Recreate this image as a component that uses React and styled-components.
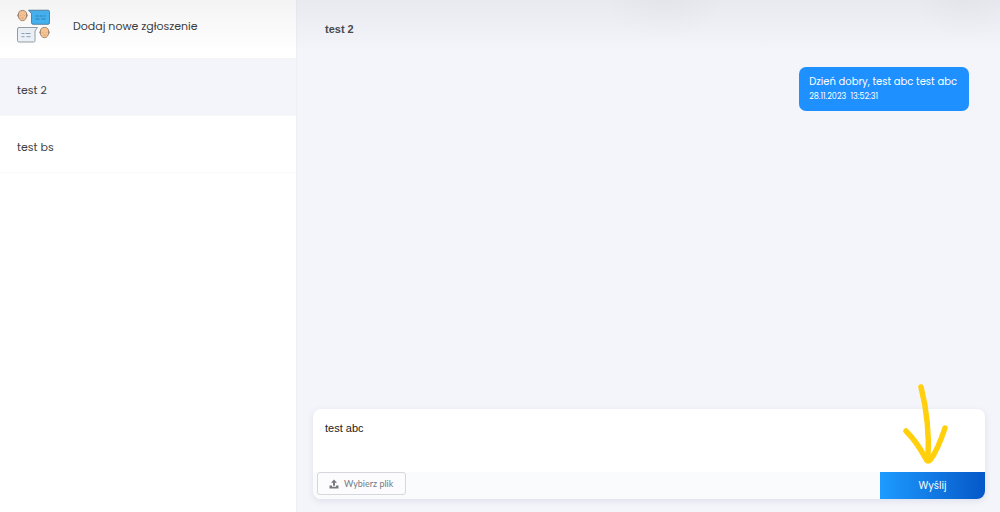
import React, { useState } from "react";
import styled, { createGlobalStyle } from "styled-components";

const GlobalStyle = createGlobalStyle`
  *, *::before, *::after { box-sizing: border-box; }
  body {
    margin: 0;
    background: #f4f5fb;
    color: #3c3e42;
    font-family: Poppins, Inter, "Liberation Sans", sans-serif;
  }
  button, textarea { font: inherit; color: inherit; }
`;

const Page = styled.div`
  position: relative;
  display: flex;
  min-height: 100vh;
`;

const TopShade = styled.div`
  position: absolute;
  inset: 0 0 auto;
  height: 52px;
  pointer-events: none;
  background:
    radial-gradient(ellipse 60px 40px at 66.5% 0, rgba(60, 60, 50, 0.03), transparent),
    radial-gradient(ellipse 50px 40px at 96.5% 0, rgba(60, 60, 50, 0.03), transparent),
    linear-gradient(rgba(40, 40, 50, 0.055), transparent);
`;

const Sidebar = styled.aside`
  display: flex;
  flex-direction: column;
  flex: 0 0 297px;
  background: #fff;
  border-right: 1px solid #eeeff5;
`;

const NewTicket = styled.button`
  display: flex;
  align-items: center;
  gap: 23px;
  height: 59px;
  padding: 0 17px 6px;
  border: 0;
  border-bottom: 1px solid #f5f5f8;
  background: transparent;
  font-size: 11px;
  line-height: 18px;
  text-align: left;
  cursor: pointer;
`;

const Threads = styled.nav`
  display: flex;
  flex-direction: column;
`;

const Thread = styled.a`
  display: flex;
  align-items: center;
  height: 57px;
  padding: 6px 17px 0;
  border-bottom: 1px solid #f8f8f8;
  background: ${({ $active }) => ($active ? "#f4f5fb" : "#fff")};
  color: inherit;
  font-size: 11px;
  line-height: 18px;
  text-decoration: none;
`;

const Conversation = styled.main`
  display: flex;
  flex: 1;
  flex-direction: column;
  min-width: 0;
  padding: 20px 15px 13px 16px;
`;

const Title = styled.h1`
  margin: 0;
  padding: 0 12px;
  color: #484a4e;
  font-family: "Liberation Sans", Arial, sans-serif;
  font-size: 11px;
  font-weight: 700;
  line-height: 18px;
`;

const Messages = styled.section`
  display: flex;
  flex: 1;
  flex-direction: column;
  align-items: flex-end;
  padding: 29px 16px;
`;

const Message = styled.article`
  height: 44px;
  padding: 7px 12px 0 10px;
  border-radius: 7px;
  background: #1e90ff;
  color: #fff;
`;

const MessageText = styled.p`
  margin: 0;
  font-size: 10px;
  line-height: 16px;
`;

const MessageTime = styled.time`
  display: block;
  font-size: 8px;
  line-height: 14px;
  white-space: pre;
`;

const Composer = styled.form`
  position: relative;
  display: flex;
  flex-direction: column;
  border-radius: 8px;
  background: #fff;
  box-shadow: 0 2px 6px rgba(60, 70, 110, 0.12);
`;

const MessageInput = styled.textarea`
  height: 63px;
  padding: 10px 12px;
  border: 0;
  border-radius: 8px 8px 0 0;
  outline: 0;
  background: transparent;
  color: #222;
  font-family: "Liberation Sans", Arial, sans-serif;
  font-size: 11px;
  line-height: 18px;
  resize: none;
`;

const Actions = styled.div`
  display: flex;
  justify-content: space-between;
  height: 27px;
  padding-left: 4px;
  border-radius: 0 0 8px 8px;
  background: #fafbfd;
`;

const FileButton = styled.button`
  display: flex;
  align-items: center;
  gap: 5px;
  height: 23px;
  padding: 0 12px 0 11px;
  border: 1px solid #d5d7dc;
  border-radius: 3px;
  background: #fcfcfe;
  color: #77797e;
  font-family: Lato, sans-serif;
  font-size: 9px;
  line-height: 14px;
  cursor: pointer;
`;

const SendButton = styled.button`
  width: 105px;
  padding: 0;
  border: 0;
  border-radius: 0 0 8px 0;
  background: linear-gradient(90deg, #1e9bff, #0558c8);
  color: #fff;
  font-size: 10px;
  font-weight: 400;
  cursor: pointer;
`;

const Pointer = styled.svg`
  position: absolute;
  right: 36px;
  bottom: 34px;
  pointer-events: none;
`;

function Face(props) {
  return (
    <g {...props}>
      <path d="M1.2 4.2Q-.4 4.4.4 6.1Q.8 7 1.6 7M8.8 4.2Q10.4 4.4 9.6 6.1Q9.2 7 8.4 7" />
      <path d="M5 .4C7.8.4 9.2 2 9.2 5C9.2 8.4 7.6 10.7 5 10.7S.8 8.4.8 5C.8 2 2.2.4 5 .4Z" />
      <path d="M3.2 5v.6M6.8 5v.6M4 8h2" strokeWidth=".5" />
    </g>
  );
}

function ChatIcon() {
  return (
    <svg width="33" height="34" viewBox="0 0 33 34" fill="none" strokeWidth=".8" strokeLinejoin="round" aria-hidden="true">
      <Face transform="translate(.5 1)" fill="#fbc795" stroke="#8f745f" />
      <Face transform="translate(22.5 18)" fill="#fbc795" stroke="#8f745f" />
      <path d="M11.5 1.2H31Q32.5 1.2 32.5 2.7V13.8Q32.5 15.3 31 15.3H16Q14.5 15.3 14.5 13.8V4.5Z" fill="#45b5f4" stroke="#426f8c" />
      <path d="M18.5 7h3m1 0h3m1 0h2M18.5 10h4m2 0h4" stroke="#2875aa" />
      <path d="M20.5 18.5H2Q.5 18.5.5 20V31.5Q.5 33 2 33H16.5Q18 33 18 31.5V22Z" fill="#edf3f9" stroke="#7d858d" />
      <path d="M4.5 24.5h3m1 0h5M4.5 27.7h3m2 0h4" stroke="#718ba5" />
    </svg>
  );
}

function UploadIcon() {
  return (
    <svg width="10" height="10" viewBox="0 0 20 20" fill="currentColor" aria-hidden="true">
      <path d="M10 1 4 7.5H8v6h4v-6h4Z" />
      <path d="M1 13h5v2.5h8V13h5v6H1Z" />
    </svg>
  );
}

const threads = ["test 2", "test bs"];

export default function App() {
  const [active, setActive] = useState(0);
  const [draft, setDraft] = useState("test abc");

  return (
    <>
      <GlobalStyle />
      <Page>
        <Sidebar>
          <NewTicket type="button">
            <ChatIcon />
            Dodaj nowe zgłoszenie
          </NewTicket>
          <Threads aria-label="Zgłoszenia">
            {threads.map((name, index) => (
              <Thread key={name} href="#" $active={index === active} onClick={() => setActive(index)}>
                {name}
              </Thread>
            ))}
          </Threads>
        </Sidebar>
        <Conversation>
          <Title>{threads[active]}</Title>
          <Messages>
            <Message>
              <MessageText>Dzień dobry, test abc test abc</MessageText>
              <MessageTime dateTime="2023-11-28T13:52:31">{"28.11.2023  13:52:31"}</MessageTime>
            </Message>
          </Messages>
          <Composer onSubmit={(event) => event.preventDefault()}>
            <MessageInput aria-label="Wiadomość" value={draft} onChange={(event) => setDraft(event.target.value)} />
            <Actions>
              <FileButton type="button">
                <UploadIcon />
                Wybierz plik
              </FileButton>
              <SendButton type="submit">Wyślij</SendButton>
            </Actions>
            <Pointer width="48" height="82" viewBox="0 0 48 82" fill="none" stroke="#ffd00b" strokeWidth="5.5" strokeLinecap="round" strokeLinejoin="round" aria-hidden="true">
              <path d="M20 4Q29 39 27 76" />
              <path d="M5 48Q16 59 25 76Q27 80 30 76Q37 66 44 45" />
            </Pointer>
          </Composer>
        </Conversation>
        <TopShade />
      </Page>
    </>
  );
}
